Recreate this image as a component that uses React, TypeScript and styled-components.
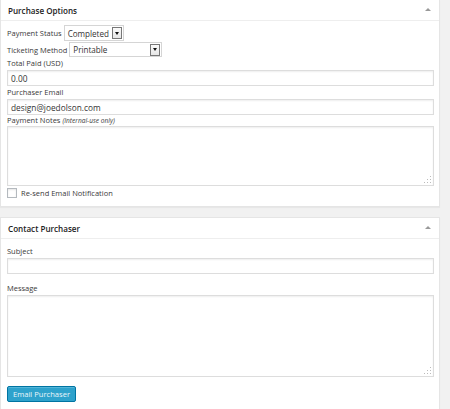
import React from 'react'
import styled, { createGlobalStyle } from 'styled-components'

const GlobalStyle = createGlobalStyle`
  html, body {
    margin: 0;
    padding: 0;
    background: #f1f1f1;
    font-family: "Open Sans", "Liberation Sans", sans-serif;
    color: #444;
  }
  * { box-sizing: border-box; }
`

const Page = styled.div`
  width: 440px;
  display: flex;
  flex-direction: column;
  gap: 10px;
`

const Panel = styled.section<{ $flushTop?: boolean }>`
  background: #fff;
  border: 1px solid #e5e5e5;
  border-top-width: ${p => (p.$flushTop ? 0 : 1)}px;
  box-shadow: 0 1px 1px rgba(0, 0, 0, 0.04);
`

const PanelHeader = styled.header`
  height: 21px;
  display: flex;
  align-items: center;
  justify-content: space-between;
  padding: 0 8px 0 7px;
  border-bottom: 1px solid #eee;
  font-size: 8.1px;
  font-weight: 600;
  color: #222;
`

const Toggle = styled.span`
  width: 0;
  height: 0;
  border-left: 3px solid transparent;
  border-right: 3px solid transparent;
  border-bottom: 3px solid #999;
  margin-top: -1px;
`

const Body = styled.div<{ $top: number; $bottom: number }>`
  padding: ${p => p.$top}px 5px ${p => p.$bottom}px 6px;
  display: flex;
  flex-direction: column;
`

const InlineRow = styled.div<{ $h: number }>`
  display: flex;
  align-items: center;
  gap: 2px;
  height: ${p => p.$h}px;
  margin-bottom: 1px;
`

const Label = styled.label<{ $gapTop?: number; $gapBottom?: number }>`
  display: block;
  font-size: 7.5px;
  line-height: 11px;
  color: #3a3a3a;
  margin-top: ${p => p.$gapTop ?? 0}px;
  margin-bottom: ${p => p.$gapBottom ?? 1}px;

  em {
    font-size: 6.6px;
  }
`

const InlineLabel = styled.span`
  font-size: 7.5px;
  color: #3a3a3a;
`

const Select = styled.div<{ $w: number }>`
  width: ${p => p.$w}px;
  height: 100%;
  display: flex;
  align-items: center;
  justify-content: space-between;
  padding: 0 1px 0 3px;
  border: 1px solid #d5d5d5;
  background: #fff;
  font-size: 8.1px;
  color: #333;
`

const SelectButton = styled.span`
  width: 10px;
  height: 12px;
  flex-shrink: 0;
  border: 1px solid #777;
  background: linear-gradient(#fafafa, #e6e6e6);
  display: flex;
  align-items: center;
  justify-content: center;

  &::after {
    content: '';
    border-left: 2.5px solid transparent;
    border-right: 2.5px solid transparent;
    border-top: 3px solid #111;
  }
`

const Input = styled.div<{ $h: number }>`
  height: ${p => p.$h}px;
  border: 1px solid #ddd;
  box-shadow: inset 0 1px 2px rgba(0, 0, 0, 0.07);
  background: #fff;
  display: flex;
  align-items: center;
  padding: 0 3px;
  font-size: 8.3px;
  color: #333;
`

const AreaWrap = styled.div<{ $h: number }>`
  position: relative;
  height: ${p => p.$h}px;
  border: 1px solid #ddd;
  box-shadow: inset 0 1px 2px rgba(0, 0, 0, 0.07);
  background: #fff;
`

const Grip = styled.svg`
  position: absolute;
  right: 1px;
  bottom: 1px;
`

const CheckRow = styled.label`
  display: flex;
  align-items: center;
  gap: 4px;
  height: 10px;
  margin-top: 2px;
  font-size: 7.5px;
  color: #3a3a3a;
`

const Check = styled.span`
  width: 10px;
  height: 10px;
  border: 1px solid #b4b9be;
  background: #fff;
  box-shadow: inset 0 1px 2px rgba(0, 0, 0, 0.1);
`

const Button = styled.button`
  align-self: flex-start;
  margin-top: 9px;
  width: 69px;
  height: 16px;
  padding: 0;
  border: 1px solid #0074a2;
  border-radius: 2px;
  background: #2ea2cc;
  box-shadow: inset 0 1px 0 rgba(120, 200, 230, 0.5);
  color: #eaf6fb;
  font-family: inherit;
  font-size: 7.6px;
`

const ResizeGrip = () => (
  <Grip width="8" height="8" viewBox="0 0 8 8">
    <g fill="#bbb">
      <rect x="6" y="0" width="1" height="1" />
      <rect x="3" y="3" width="1" height="1" />
      <rect x="6" y="3" width="1" height="1" />
      <rect x="0" y="6" width="1" height="1" />
      <rect x="3" y="6" width="1" height="1" />
      <rect x="6" y="6" width="1" height="1" />
    </g>
  </Grip>
)

const TextArea = ({ h }: { h: number }) => (
  <AreaWrap $h={h}>
    <ResizeGrip />
  </AreaWrap>
)

export default function App() {
  return (
    <>
      <GlobalStyle />
      <Page>
        <Panel $flushTop>
          <PanelHeader>
            Purchase Options
            <Toggle />
          </PanelHeader>
          <Body $top={4} $bottom={8}>
            <InlineRow $h={16}>
              <InlineLabel>Payment Status</InlineLabel>
              <Select $w={60}>
                Completed
                <SelectButton />
              </Select>
            </InlineRow>
            <InlineRow $h={15}>
              <InlineLabel>Ticketing Method</InlineLabel>
              <Select $w={93}>
                Printable
                <SelectButton />
              </Select>
            </InlineRow>
            <Label>Total Paid (USD)</Label>
            <Input $h={16}>0.00</Input>
            <Label $gapTop={1}>Purchaser Email</Label>
            <Input $h={16}>design@joedolson.com</Input>
            <Label $gapBottom={0}>
              Payment Notes <em>(Internal-use only)</em>
            </Label>
            <TextArea h={60} />
            <CheckRow>
              <Check />
              Re-send Email Notification
            </CheckRow>
          </Body>
        </Panel>
        <Panel>
          <PanelHeader>
            Contact Purchaser
            <Toggle />
          </PanelHeader>
          <Body $top={7} $bottom={10}>
            <Label>Subject</Label>
            <Input $h={16} />
            <Label $gapTop={9}>Message</Label>
            <TextArea h={82} />
            <Button>Email Purchaser</Button>
          </Body>
        </Panel>
      </Page>
    </>
  )
}
